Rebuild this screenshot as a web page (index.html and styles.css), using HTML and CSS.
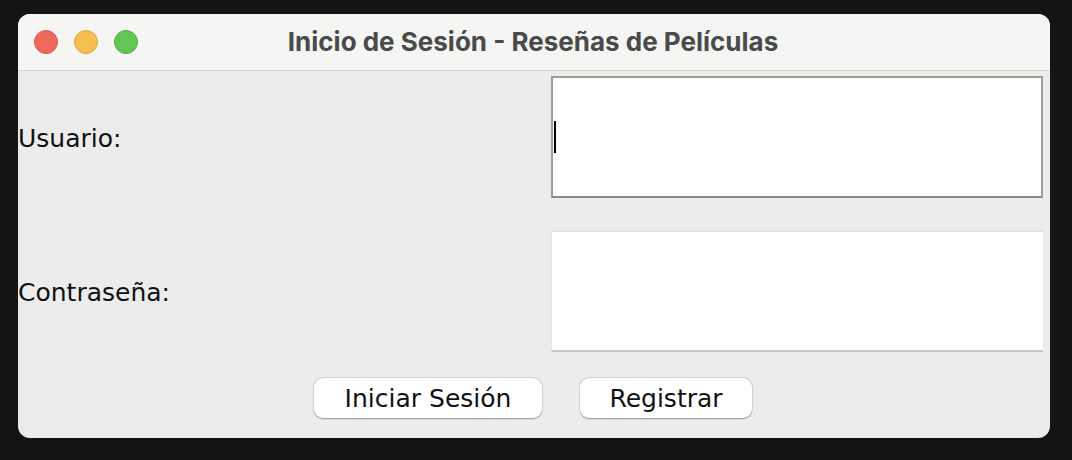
FILE: index.html
```html
<!DOCTYPE html>
<html lang="es">
<head>
<meta charset="utf-8">
<title>Inicio de Sesión - Reseñas de Películas</title>
<link rel="stylesheet" href="styles.css">
</head>
<body>
<div class="window">
  <div class="titlebar">
    <div class="lights">
      <span class="light red"></span>
      <span class="light yellow"></span>
      <span class="light green"></span>
    </div>
    <div class="title">Inicio de Sesión - Reseñas de Películas</div>
  </div>
  <div class="content">
    <div class="form">
      <label class="label">Usuario:</label>
      <div class="field focused"><span class="caret"></span></div>
      <label class="label">Contraseña:</label>
      <div class="field"></div>
    </div>
    <div class="actions">
      <button class="btn btn-login">Iniciar Sesión</button>
      <button class="btn btn-register">Registrar</button>
    </div>
  </div>
</div>
</body>
</html>
```
FILE: styles.css
```css
* { box-sizing: border-box; }
html, body { margin: 0; }
body {
  background: #141414;
  padding: 14px 22px 22px 18px;
  width: 1072px;
  height: 460px;
  overflow: hidden;
}
.window {
  width: 1032px;
  height: 424px;
  border-radius: 12px;
  overflow: hidden;
  background: #ececec;
  display: flex;
  flex-direction: column;
}
.titlebar {
  position: relative;
  height: 57px;
  flex: none;
  background: #f5f5f3;
  border-bottom: 1px solid #d2d2d0;
  display: flex;
  align-items: center;
  justify-content: center;
}
.lights {
  position: absolute;
  left: 16px;
  top: 16px;
  display: flex;
  gap: 16px;
}
.light {
  width: 24px;
  height: 24px;
  border-radius: 50%;
  display: block;
}
.red { background: #ee6a5f; border: 1px solid #d7574c; }
.yellow { background: #f6c050; border: 1px solid #dca640; }
.green { background: #62c655; border: 1px solid #50ad43; }
.title {
  font-family: "Inter", "Liberation Sans", sans-serif;
  font-weight: 700;
  font-size: 26px;
  color: #4a4a4a;
  margin-top: -2px;
  padding-right: 2px;
}
.content {
  flex: 1;
  display: flex;
  flex-direction: column;
}
.form {
  display: grid;
  grid-template-columns: 533px 492px;
  grid-template-rows: 122px 121px;
  row-gap: 33px;
  padding-top: 5px;
}
.label {
  font-family: "DejaVu Sans", "Liberation Sans", sans-serif;
  font-size: 25px;
  color: #111;
  align-self: center;
  padding-top: 2px;
}
.field {
  background: #fff;
  border-top: 1px solid #dcdcdc;
  border-left: 1px solid #e4e4e4;
  border-bottom: 2px solid #c6c6c6;
  display: flex;
  align-items: center;
}
.field.focused {
  border: 2px solid #99a292;
  border-bottom-color: #87907f;
}
.caret {
  width: 2px;
  height: 32px;
  background: #000;
  margin-left: 1px;
}
.actions {
  display: flex;
  justify-content: center;
  gap: 38px;
  padding-top: 26px;
  padding-right: 2px;
}
.btn {
  font-family: "DejaVu Sans", "Liberation Sans", sans-serif;
  font-size: 25px;
  color: #111;
  background: #fff;
  border: none;
  border-radius: 9px;
  height: 40px;
  padding: 0;
  box-shadow: 0 0.5px 1.5px rgba(0,0,0,0.35), 0 0 0 0.5px rgba(0,0,0,0.08);
}
.btn-login { width: 228px; }
.btn-register { width: 172px; }
```
